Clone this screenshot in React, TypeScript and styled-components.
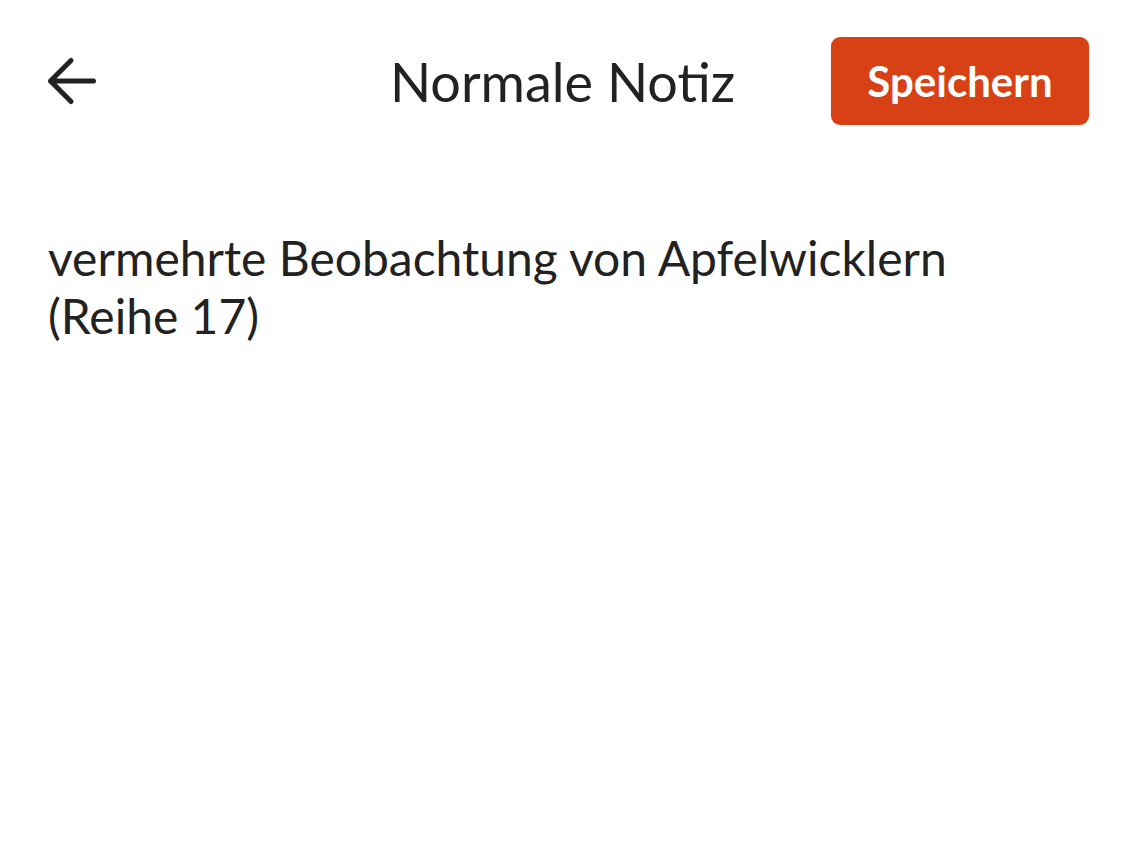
import React from "react";
import styled, { createGlobalStyle } from "styled-components";

const Global = createGlobalStyle`
  html, body { margin: 0; padding: 0; background: #fff; }
  body { font-family: Lato, "Noto Sans", sans-serif; color: #222; }
`;

const Page = styled.div`
  width: 1125px;
  height: 844px;
  box-sizing: border-box;
  display: flex;
  flex-direction: column;
  background: #fff;
`;

const Header = styled.header`
  display: grid;
  grid-template-columns: 1fr auto 1fr;
  align-items: center;
  padding: 37px 36px 0 36px;
  height: 88px;
`;

const BackButton = styled.button`
  justify-self: start;
  margin-left: 8px;
  background: none;
  border: none;
  padding: 0;
  width: 56px;
  height: 56px;
  display: flex;
  align-items: center;
  justify-content: flex-start;
  color: #222;
  cursor: pointer;
`;

const Title = styled.h1`
  margin: 0;
  font-family: Lato, sans-serif;
  font-weight: 400;
  font-size: 54px;
  color: #222;
`;

const SaveButton = styled.button`
  justify-self: end;
  background: #d84015;
  color: #fff;
  border: none;
  border-radius: 9px;
  width: 258px;
  height: 88px;
  padding: 0;
  font-family: Lato, sans-serif;
  font-weight: 700;
  font-size: 42px;
  cursor: pointer;
`;

const Body = styled.main`
  padding: 0 48px;
  margin-top: 104px;
`;

const NoteText = styled.p`
  margin: 0;
  font-family: Lato, sans-serif;
  font-size: 48px;
  line-height: 57.6px;
  color: #222;
  max-width: 960px;
`;

export default function App() {
  return (
    <>
      <Global />
      <Page>
        <Header>
          <BackButton aria-label="Zurück">
            <svg width="56" height="56" viewBox="0 0 56 56" fill="none">
              <path
                d="M6.5 28 H49.5 M27 7.5 L6.5 28 L27 48.5"
                stroke="#222"
                strokeWidth="5"
                strokeLinecap="round"
                strokeLinejoin="round"
              />
            </svg>
          </BackButton>
          <Title>Normale Notiz</Title>
          <SaveButton>Speichern</SaveButton>
        </Header>
        <Body>
          <NoteText>
            vermehrte Beobachtung von Apfelwicklern
            <br />
            (Reihe 17)
          </NoteText>
        </Body>
      </Page>
    </>
  );
}
